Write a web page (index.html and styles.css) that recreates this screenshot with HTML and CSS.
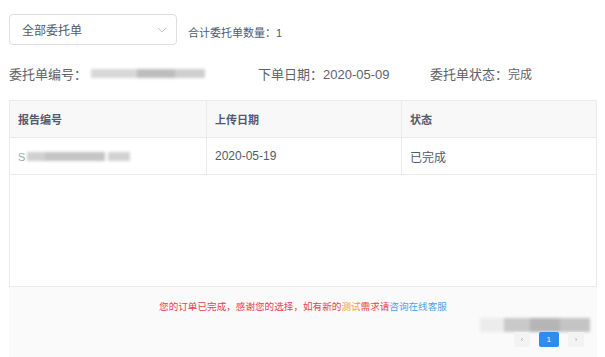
FILE: index.html
```html
<!DOCTYPE html>
<html lang="zh-CN">
<head>
<meta charset="utf-8">
<title>委托单</title>
<link rel="stylesheet" href="styles.css">
</head>
<body>
<div class="page">
  <div class="toolbar">
    <div class="select">
      <span class="select-text">全部委托单</span>
      <svg class="chevron" width="10" height="6" viewBox="0 0 10 6"><path d="M1 1 L5 5 L9 1" fill="none" stroke="#c0c4cc" stroke-width="1"/></svg>
    </div>
    <span class="count">合计委托单数量：1</span>
  </div>

  <div class="info">
    <div class="info-item item-no">委托单编号：<span class="mask mask-no"><i class="m1"></i><i class="m2"></i><i class="m3"></i></span></div>
    <div class="info-item item-date">下单日期：2020-05-09</div>
    <div class="info-item item-status">委托单状态：<span class="small">完成</span></div>
  </div>

  <table class="grid">
    <thead>
      <tr><th class="c1">报告编号</th><th class="c2">上传日期</th><th class="c3">状态</th></tr>
    </thead>
    <tbody>
      <tr class="row">
        <td><span class="s-letter">S</span><span class="mask mask-rep"><i class="r1"></i><i class="r2"></i><i class="r3"></i></span></td>
        <td>2020-05-19</td>
        <td>已完成</td>
      </tr>
      <tr class="empty"><td colspan="3"></td></tr>
    </tbody>
  </table>

  <div class="footer">
    <p class="msg"><span class="red">您的订单已完成，感谢您的选择，如有新的</span><span class="orange">测试</span><span class="red">需求请</span><span class="blue">咨询在线客服</span></p>
    <div class="pager">
      <div class="pager-mask"><i class="p1"></i><i class="p2"></i><i class="p3"></i><i class="p4"></i></div>
      <div class="pager-btns">
        <span class="pbtn">‹</span>
        <span class="pbtn active">1</span>
        <span class="pbtn">›</span>
      </div>
    </div>
  </div>
</div>
</body>
</html>
```

FILE: styles.css
```css
* { box-sizing: border-box; }
html, body { margin: 0; padding: 0; background: #fff; }
body {
  font-family: "Liberation Sans", "Noto Sans CJK SC", sans-serif;
  color: #515a6e;
  width: 605px;
  height: 357px;
  overflow: hidden;
}
.page { padding: 14px 8px 0 9px; }

.toolbar { display: flex; align-items: flex-end; gap: 11px; }
.select {
  width: 168px;
  height: 31px;
  border: 1px solid #dcdee2;
  border-radius: 4px;
  display: flex;
  align-items: center;
  justify-content: space-between;
  padding: 0 9px 0 12px;
  background: #fff;
}
.select-text { font-size: 12px; color: #515a6e; }
.chevron { display: block; }
.count { font-size: 11px; line-height: 16px; color: #515a6e; padding-bottom: 4px; }

.info {
  display: flex;
  margin-top: 18px;
  height: 20px;
  align-items: center;
  font-size: 13px;
  color: #606266;
}
.info-item { display: flex; align-items: center; white-space: nowrap; }
.item-no { width: 249px; }
.item-date { width: 172px; }
.small { font-size: 12px; }

.mask { display: flex; align-items: center; filter: blur(1.5px); }
.mask i { display: block; height: 9px; }
.mask-no { margin-left: 4px; }
.mask-no .m1 { width: 46px; background: #d8d8d8; }
.mask-no .m2 { width: 38px; background: #bdbdbd; }
.mask-no .m3 { width: 30px; background: #cfcfcf; }

.grid {
  margin-top: 17px;
  width: 588px;
  border-collapse: collapse;
  border: 1px solid #e8eaec;
  table-layout: fixed;
}
.grid th, .grid td {
  text-align: left;
  padding: 0 0 0 8px;
  border-bottom: 1px solid #e8eaec;
}
.grid th {
  height: 37px;
  background: #f8f8f9;
  font-size: 11px;
  font-weight: bold;
  color: #515a6e;
  border-right: 1px solid #e8eaec;
}
.grid th.c3 { border-right: none; }
.c1 { width: 197px; }
.c2 { width: 195px; }
.row td {
  height: 37px;
  font-size: 12px;
  color: #515a6e;
  border-right: 1px solid #e8eaec;
}
.row td:last-child { border-right: none; }
.s-letter { color: #9aa; font-size: 11px; vertical-align: middle; }
.mask-rep { display: inline-flex; vertical-align: middle; margin-left: 2px; }
.mask-rep .r1 { width: 18px; background: #d0d0d0; }
.mask-rep .r2 { width: 60px; background: #c4c4c4; }
.mask-rep .r3 { width: 22px; background: #d2d2d2; margin-left: 3px; }
.empty td { height: 112px; border-bottom: none; padding: 0; }

.footer {
  width: 588px;
  height: 71px;
  background: #fafafa;
  position: relative;
}
.msg {
  margin: 0;
  padding-top: 13px;
  text-align: center;
  font-size: 9.6px;
  line-height: 14px;
}
.red { color: #e8424f; }
.orange { color: #f39a2a; }
.blue { color: #4aa3ee; }

.pager {
  position: absolute;
  right: 7px;
  top: 31px;
  width: 110px;
}
.pager-mask { display: flex; height: 14px; filter: blur(1.5px); }
.pager-mask i { display: block; height: 14px; }
.pager-mask .p1 { width: 24px; background: #ececec; }
.pager-mask .p2 { width: 26px; background: #c9c9c9; }
.pager-mask .p3 { width: 30px; background: #b5b5b5; }
.pager-mask .p4 { width: 30px; background: #c4c4c4; }
.pager-btns {
  display: flex;
  justify-content: flex-end;
  gap: 9px;
  padding-right: 6px;
  filter: blur(0.6px);
}
.pbtn {
  width: 16px;
  height: 15px;
  font-size: 8px;
  line-height: 15px;
  text-align: center;
  color: #aaa;
  background: #f3f3f3;
  border-radius: 2px;
}
.pbtn.active { width: 20px; background: #2d8cf0; color: #fff; }
```
